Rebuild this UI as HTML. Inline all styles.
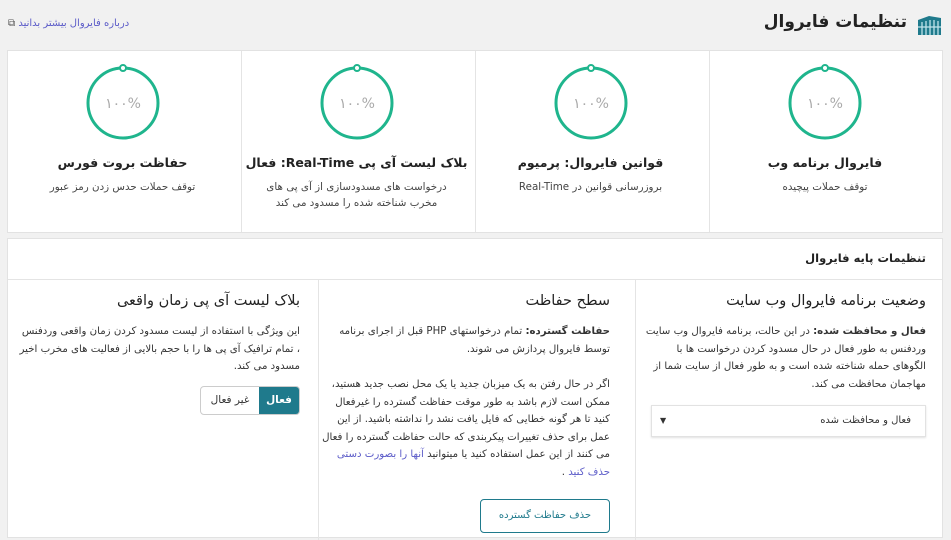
<!DOCTYPE html>
<html dir="rtl"><head><meta charset="utf-8"><style>
*{box-sizing:border-box;margin:0;padding:0}
body{width:951px;height:523px;overflow:hidden;background:#f1f1f1;font-family:"DejaVu Sans","Liberation Sans",sans-serif;color:#333;font-size:11px;position:relative}
.abs{position:absolute}
.title{right:44px;top:12px;font-size:17px;color:#222;font-weight:bold}
.link{left:8px;top:18px;font-size:10px;color:#5b5bc8}
.card{background:#fff;border:1px solid #e2e2e2}
.col{position:absolute;top:0;height:100%;text-align:center}
.col svg{position:absolute;left:50%;margin-left:-40px;top:12px}
.col h3{position:absolute;top:104px;width:100%;font-size:12.5px;color:#222;font-weight:bold}
.col p{position:absolute;top:128px;width:100%;font-size:10.3px;color:#444;line-height:16px;padding:0 14px}
.sep{position:absolute;top:0;width:1px;height:100%;background:#e4e4e4}
h2{font-size:14.5px;font-weight:normal;color:#222}
.bc p{font-size:10.2px;line-height:17.5px;color:#333}
a{color:#5b5bc8;text-decoration:none}
</style></head><body>
<div class="abs" style="right:9px;top:14px;width:25px;height:22px">
<svg width="25" height="22" viewBox="0 0 25 22"><path d="M1 6 L12 2 L24 4 L24 21 L1 21Z" fill="#1f7a8c"/><g stroke="#bfe3ea" stroke-width="1.3"><line x1="5" y1="8" x2="5" y2="21"/><line x1="9" y1="7" x2="9" y2="21"/><line x1="13" y1="6" x2="13" y2="21"/><line x1="17" y1="6" x2="17" y2="21"/><line x1="21" y1="7" x2="21" y2="21"/><line x1="1" y1="13" x2="24" y2="13"/></g></svg></div>
<div class="abs title">تنظیمات فایروال</div>
<div class="abs link">درباره فایروال بیشتر بدانید <span style="color:#555">⧉</span></div>

<div class="abs card" style="left:7px;top:50px;width:936px;height:183px">
<div class="sep" style="left:233px"></div><div class="sep" style="left:467px"></div><div class="sep" style="left:701px"></div>
<div class="col" style="right:0;width:234px"><svg width="80" height="80"><circle cx="40" cy="40" r="35" fill="none" stroke="#1fb58d" stroke-width="3"/><circle cx="40" cy="5" r="3" fill="#fff" stroke="#1fb58d" stroke-width="2"/><text x="40" y="45" text-anchor="middle" font-size="14" fill="#aaa" font-family="DejaVu Sans">۱۰۰%</text></svg><h3>فایروال برنامه وب</h3><p>توقف حملات پیچیده</p></div>
<div class="col" style="right:235px;width:233px"><svg width="80" height="80"><circle cx="40" cy="40" r="35" fill="none" stroke="#1fb58d" stroke-width="3"/><circle cx="40" cy="5" r="3" fill="#fff" stroke="#1fb58d" stroke-width="2"/><text x="40" y="45" text-anchor="middle" font-size="14" fill="#aaa" font-family="DejaVu Sans">۱۰۰%</text></svg><h3>قوانین فایروال: پرمیوم</h3><p>بروزرسانی قوانین در Real-Time</p></div>
<div class="col" style="right:469px;width:233px"><svg width="80" height="80"><circle cx="40" cy="40" r="35" fill="none" stroke="#1fb58d" stroke-width="3"/><circle cx="40" cy="5" r="3" fill="#fff" stroke="#1fb58d" stroke-width="2"/><text x="40" y="45" text-anchor="middle" font-size="14" fill="#aaa" font-family="DejaVu Sans">۱۰۰%</text></svg><h3>بلاک لیست آی پی Real-Time: فعال</h3><p>درخواست های مسدودسازی از آی پی های مخرب شناخته شده را مسدود می کند</p></div>
<div class="col" style="right:703px;width:233px"><svg width="80" height="80"><circle cx="40" cy="40" r="35" fill="none" stroke="#1fb58d" stroke-width="3"/><circle cx="40" cy="5" r="3" fill="#fff" stroke="#1fb58d" stroke-width="2"/><text x="40" y="45" text-anchor="middle" font-size="14" fill="#aaa" font-family="DejaVu Sans">۱۰۰%</text></svg><h3>حفاظت بروت فورس</h3><p>توقف حملات حدس زدن رمز عبور</p></div>
</div>

<div class="abs card bc" style="left:7px;top:238px;width:936px;height:300px">
<div class="abs" style="right:16px;top:12px;font-size:11.5px;font-weight:bold;color:#222">تنظیمات پایه فایروال</div>
<div class="abs" style="left:0;right:0;top:40px;height:1px;background:#e4e4e4"></div>
<div class="abs" style="left:310px;top:41px;width:1px;height:260px;background:#e4e4e4"></div>
<div class="abs" style="left:627px;top:41px;width:1px;height:260px;background:#e4e4e4"></div>

<div class="abs" style="right:16px;top:54px;width:282px">
<h2>وضعیت برنامه فایروال وب سایت</h2>
<p style="margin-top:14px"><b>فعال و محافظت شده:</b> در این حالت، برنامه فایروال وب سایت وردفنس به طور فعال در حال مسدود کردن درخواست ها با الگوهای حمله شناخته شده است و به طور فعال از سایت شما از مهاجمان محافظت می کند.</p>
<div style="margin-top:12px;width:275px;height:32px;border:1px solid #e2e2e2;box-shadow:0 1px 2px rgba(0,0,0,.12);position:relative;font-size:10px;line-height:30px;padding-right:14px">فعال و محافظت شده<span style="position:absolute;left:8px;font-size:8px">▼</span></div>
</div>

<div class="abs" style="right:332px;top:54px;width:290px">
<h2>سطح حفاظت</h2>
<p style="margin-top:14px"><b>حفاظت گسترده:</b> تمام درخواستهای PHP قبل از اجرای برنامه توسط فایروال پردازش می شوند.</p>
<p style="margin-top:18px">اگر در حال رفتن به یک میزبان جدید یا یک محل نصب جدید هستید، ممکن است لازم باشد به طور موقت حفاظت گسترده را غیرفعال کنید تا هر گونه خطایی که فایل یافت نشد را نداشته باشید. از این عمل برای حذف تغییرات پیکربندی که حالت حفاظت گسترده را فعال می کنند از این عمل استفاده کنید یا میتوانید <a>آنها را بصورت دستی حذف کنید</a> .</p>
<div style="margin-top:18px;width:130px;height:34px;border:1px solid #1f7a8c;border-radius:4px;text-align:center;line-height:32px;font-size:10px;color:#1f7a8c">حذف حفاظت گسترده</div>
</div>

<div class="abs" style="right:642px;top:54px;width:282px">
<h2>بلاک لیست آی پی زمان واقعی</h2>
<p style="margin-top:14px">این ویژگی با استفاده از لیست مسدود کردن زمان واقعی وردفنس ، تمام ترافیک آی پی ها را با حجم بالایی از فعالیت های مخرب اخیر مسدود می کند.</p>
<div style="margin-top:10px;display:flex;height:29px;width:100px;border:1px solid #ccc;border-radius:4px;overflow:hidden;font-size:10.5px">
<div style="width:40px;background:#1f7a8c;color:#fff;font-weight:bold;text-align:center;line-height:27px">فعال</div>
<div style="flex:1;text-align:center;line-height:27px;color:#333">غیر فعال</div></div>
</div>
</div>
</body></html>
